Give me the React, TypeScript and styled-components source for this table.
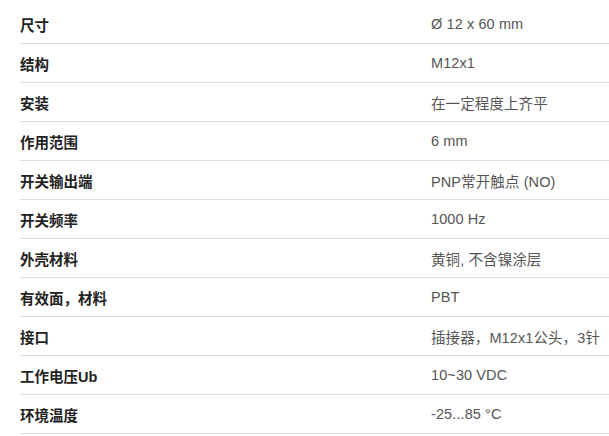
import { FC } from 'react';
import styled, { createGlobalStyle } from 'styled-components';

const GlobalStyle = createGlobalStyle`
	html, body {
		margin: 0;
		padding: 0;
		background: #fff;
	}
	body {
		font-family: 'Liberation Sans', Arial, 'Noto Sans CJK SC', sans-serif;
	}
`;

const specs: [string, string][] = [
	['尺寸', 'Ø 12 x 60 mm'],
	['结构', 'M12x1'],
	['安装', '在一定程度上齐平'],
	['作用范围', '6 mm'],
	['开关输出端', 'PNP常开触点 (NO)'],
	['开关频率', '1000 Hz'],
	['外壳材料', '黄铜, 不含镍涂层'],
	['有效面，材料', 'PBT'],
	['接口', '插接器，M12x1公头，3针'],
	['工作电压Ub', '10~30 VDC'],
	['环境温度', '-25...85 °C'],
];

const App: FC = () => {
	return (
		<>
			<GlobalStyle />
			<SpecTable>
				{specs.map(([label, value]) => (
					<SpecRow key={label}>
						<SpecLabel>{label}</SpecLabel>
						<SpecValue>{value}</SpecValue>
					</SpecRow>
				))}
			</SpecTable>
		</>
	);
};

const SpecTable = styled.div`
	display: flex;
	flex-direction: column;
	padding: 5px 0 0 20px;
`;

const SpecRow = styled.div`
	display: grid;
	grid-template-columns: 411px 1fr;
	align-items: center;
	height: 38px;
	border-bottom: 1px solid #dcdcdc;
`;

const SpecLabel = styled.div`
	font-size: 14.5px;
	font-weight: bold;
	color: #222;
	white-space: nowrap;
`;

const SpecValue = styled.div`
	font-size: 14.5px;
	color: #555;
	white-space: nowrap;
	letter-spacing: 0.1px;
`;

export default App;
